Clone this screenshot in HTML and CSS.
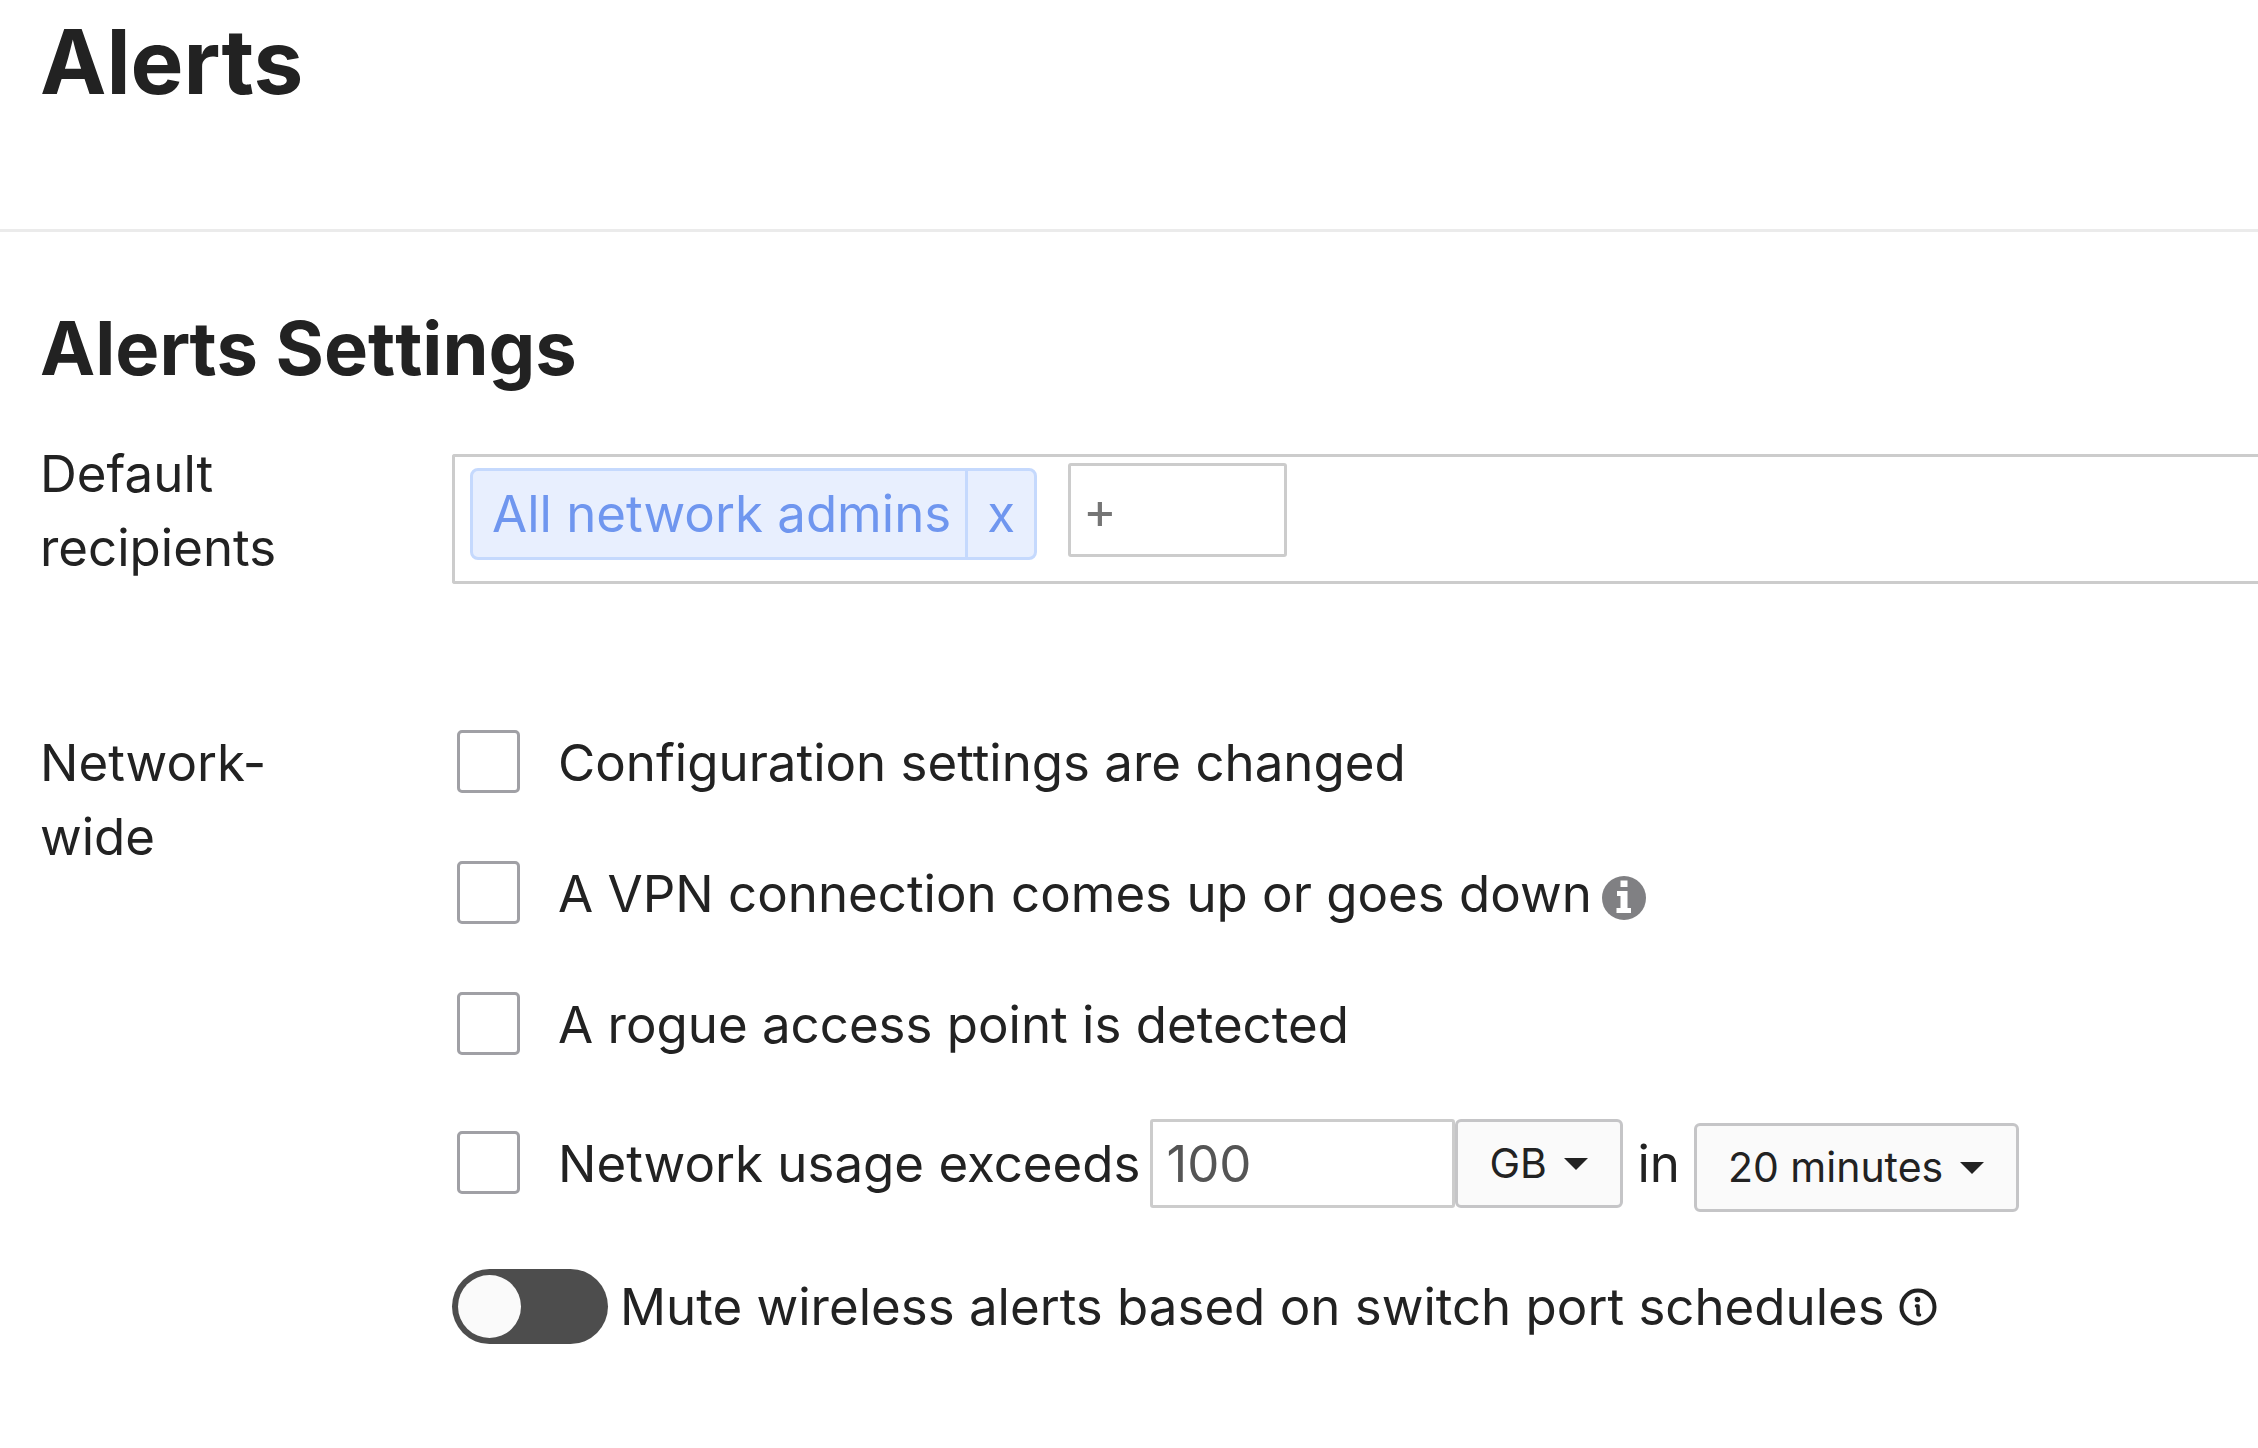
FILE: index.html
```html
<!DOCTYPE html>
<html lang="en">
<head>
<meta charset="utf-8">
<meta name="viewport" content="width=device-width, initial-scale=1">
<title>Alerts</title>
<link rel="stylesheet" href="styles.css">
</head>
<body>
<header class="page-header">
  <h1 class="page-title">Alerts</h1>
</header>
<main class="page-main">
  <h2 class="section-title">Alerts Settings</h2>

  <div class="setting recipients-setting">
    <label class="setting-label" for="add-recipient">Default recipients</label>
    <div class="recipients">
      <span class="chip">
        <span class="chip-text">All network admins</span>
        <button class="chip-remove" type="button" title="Remove">x</button>
      </span>
      <input class="recipient-input" id="add-recipient" type="text" placeholder="+">
    </div>
  </div>

  <div class="setting">
    <div class="setting-label" id="network-wide">Network-wide</div>
    <div class="options" role="group" aria-labelledby="network-wide">
      <div class="option">
        <label class="option-label"><input class="checkbox" type="checkbox">Configuration settings are changed</label>
      </div>
      <div class="option">
        <label class="option-label"><input class="checkbox" type="checkbox">A VPN connection comes up or goes down</label>
        <svg class="info-solid" viewBox="0 0 44 44" aria-hidden="true">
          <circle cx="22" cy="22" r="22" fill="#808083"/>
          <path fill="#fff" d="M18.500 4.500h7v6.500h-7zM15 15h10.500v17h3.500v5h-14.500v-5h4v-12h-3.500z"/>
        </svg>
      </div>
      <div class="option">
        <label class="option-label"><input class="checkbox" type="checkbox">A rogue access point is detected</label>
      </div>
      <div class="option usage-option">
        <label class="option-label"><input class="checkbox" type="checkbox">Network usage exceeds</label>
        <span class="amount">
          <input class="amount-input" type="text" value="100" aria-label="Usage amount">
          <span class="dropdown unit">
            <select class="dropdown-select" aria-label="Unit"><option>GB</option></select>
            <svg class="caret" viewBox="0 0 24 12" aria-hidden="true"><path d="M0 0h24L12 12z"/></svg>
          </span>
        </span>
        <span class="in">in</span>
        <span class="dropdown duration">
          <select class="dropdown-select" aria-label="Duration"><option>20 minutes</option></select>
          <svg class="caret" viewBox="0 0 24 12" aria-hidden="true"><path d="M0 0h24L12 12z"/></svg>
        </span>
      </div>
      <div class="option">
        <label class="toggle-label"><input class="toggle" type="checkbox" role="switch">Mute wireless alerts based on switch port schedules</label>
        <svg class="info-outline" viewBox="0 0 38 38" aria-hidden="true">
          <circle cx="19" cy="19" r="16.500" fill="none" stroke="#222" stroke-width="4"/>
          <circle cx="18.500" cy="11.500" r="2.800" fill="#222"/>
          <path fill="none" stroke="#222" stroke-width="3.600" stroke-linecap="round" stroke-linejoin="round" d="M17.500 18h1.500v7.500q0 1.500 1.500 1.500"/>
        </svg>
      </div>
    </div>
  </div>
</main>
</body>
</html>
```

FILE: styles.css
```css
* {
  box-sizing: border-box;
}

body {
  margin: 0;
  background: #fff;
  color: #222;
  font-family: Inter, "Liberation Sans", sans-serif;
  font-size: 51px;
  line-height: 74px;
}

input,
select,
button {
  margin: 0;
  font: inherit;
  color: inherit;
}

.page-header {
  padding: 9px 40px 114px;
  border-bottom: 3px solid #ebebeb;
}

.page-title {
  margin: 0;
  font-size: 89px;
  line-height: 106px;
}

.page-main {
  padding: 72px 0 72px 40px;
}

.section-title {
  margin: 0 0 45px;
  font-size: 74px;
  font-kerning: none;
  line-height: 88px;
}

.setting {
  display: grid;
  grid-template-columns: 300px 1fr;
  column-gap: 112px;
  align-items: start;
}

.recipients-setting {
  margin-bottom: 141px;
}

.recipients {
  display: flex;
  align-items: flex-start;
  gap: 31px;
  margin-top: 17px;
  padding: 6px 15px 21px;
  border: 3px solid #ccc;
  border-right: 0;
  border-radius: 3px 0 0 3px;
}

.chip {
  display: flex;
  margin-top: 5px;
  border: 3px solid #c5d9fd;
  border-radius: 8px;
  background: #e8effe;
  color: #6f96ef;
  line-height: 86px;
}

.chip-text {
  padding: 0 14px 0 19px;
}

.chip-remove {
  padding: 0 19px;
  border: 0;
  border-left: 3px solid #c5d9fd;
  background: none;
}

.recipient-input {
  width: 219px;
  height: 94px;
  padding: 0 12px;
  border: 3px solid #ccc;
  border-radius: 3px;
  background: #fff;
}

.recipient-input::placeholder {
  color: #757575;
}

.options {
  display: grid;
  gap: 57px;
}

.option {
  display: flex;
  align-items: flex-start;
}

.option-label {
  display: flex;
  align-items: center;
  gap: 38px;
  padding-left: 5px;
}

.checkbox {
  appearance: none;
  flex: none;
  width: 63px;
  height: 63px;
  margin-bottom: 4px;
  border: 3px solid #a0a0a5;
  border-radius: 5px;
  background: #fff;
}

.info-solid {
  width: 44px;
  height: 44px;
  margin: 19px 0 0 10px;
}

.info-outline {
  width: 38px;
  height: 38px;
  margin: 19px 0 0 14px;
}

.usage-option {
  line-height: 90px;
}

.amount {
  display: flex;
  margin-left: 10px;
}

.amount-input {
  width: 305px;
  height: 89px;
  padding: 0 13px;
  border: 3px solid #ccc;
  border-radius: 3px;
  background: #fff;
  color: #555;
}

.in {
  margin: 0 14px;
}

.dropdown {
  display: grid;
  grid-template-rows: 100%;
  align-items: center;
  height: 89px;
  font-size: 41px;
}

.unit {
  width: 168px;
}

.duration {
  width: 325px;
  margin-top: 4px;
}

.dropdown-select {
  appearance: none;
  grid-area: 1 / 1;
  width: 100%;
  height: 100%;
  padding: 0 31px;
  border: 3px solid #c5c5c7;
  border-radius: 6px;
  background: #fafafa;
  line-height: 83px;
}

.caret {
  grid-area: 1 / 1;
  justify-self: end;
  width: 24px;
  height: 12px;
  margin-right: 35px;
  fill: #222;
  pointer-events: none;
}

.toggle-label {
  display: flex;
  align-items: center;
  gap: 12px;
}

.toggle {
  appearance: none;
  display: flex;
  flex: none;
  width: 156px;
  height: 75px;
  padding: 6px;
  border-radius: 38px;
  background: #4d4d4d;
}

.toggle::before {
  content: "";
  width: 63px;
  height: 63px;
  border-radius: 50%;
  background: #fafafa;
}

.toggle:checked {
  justify-content: flex-end;
}
```
